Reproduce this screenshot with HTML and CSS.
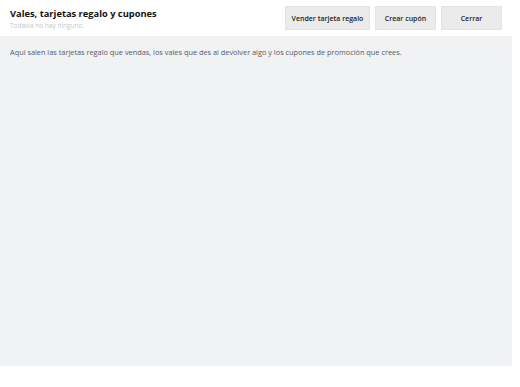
FILE: index.html
```html
<!DOCTYPE html>
<html lang="es">
<head>
  <meta charset="UTF-8" />
  <title>Vales, tarjetas regalo y cupones</title>
  <link rel="stylesheet" href="styles.css">
</head>
<body>
<div class="panel">
  <div class="panel-header">
    <div class="panel-title">
      <h1>Vales, tarjetas regalo y cupones</h1>
      <p class="subtitle">Todavía no hay ninguno.</p>
    </div>
    <div class="actions">
      <button class="btn btn-wide">Vender tarjeta regalo</button>
      <button class="btn">Crear cupón</button>
      <button class="btn">Cerrar</button>
    </div>
  </div>
  <div class="panel-body">
    <p class="hint">Aquí salen las tarjetas regalo que vendas, los vales que des al devolver algo y los cupones de promoción que crees.</p>
  </div>
</div>
</body>
</html>
```

FILE: styles.css
```css
html, body {
  margin: 0;
  padding: 0;
  background: #fff;
}
body {
  font-family: "Open Sans", "Noto Sans", sans-serif;
  width: 512px;
  height: 387px;
}
.panel {
  display: flex;
  flex-direction: column;
  height: 366px;
}
.panel-header {
  display: flex;
  justify-content: space-between;
  align-items: flex-start;
  height: 36px;
  padding: 0 10px;
  background: #fff;
}
.panel-title h1 {
  margin: 7px 0 0;
  font-size: 9.3px;
  font-weight: 700;
  color: #111;
  line-height: 14px;
}
.subtitle {
  margin: 0;
  font-size: 6.5px;
  line-height: 9px;
  color: #c3c6cc;
}
.actions {
  display: flex;
  gap: 5px;
  padding-top: 6px;
}
.btn {
  font-family: inherit;
  font-size: 7px;
  font-weight: 600;
  color: #222;
  background: #ebebeb;
  border: 1px solid #e4e4e4;
  height: 24px;
  width: 61px;
  padding: 0;
  cursor: pointer;
}
.btn-wide {
  width: 85px;
}
.panel-body {
  flex: 1;
  background: #f1f2f4;
  padding: 11px 10px;
}
.hint {
  margin: 0;
  font-size: 7.35px;
  color: #555a60;
}
```
